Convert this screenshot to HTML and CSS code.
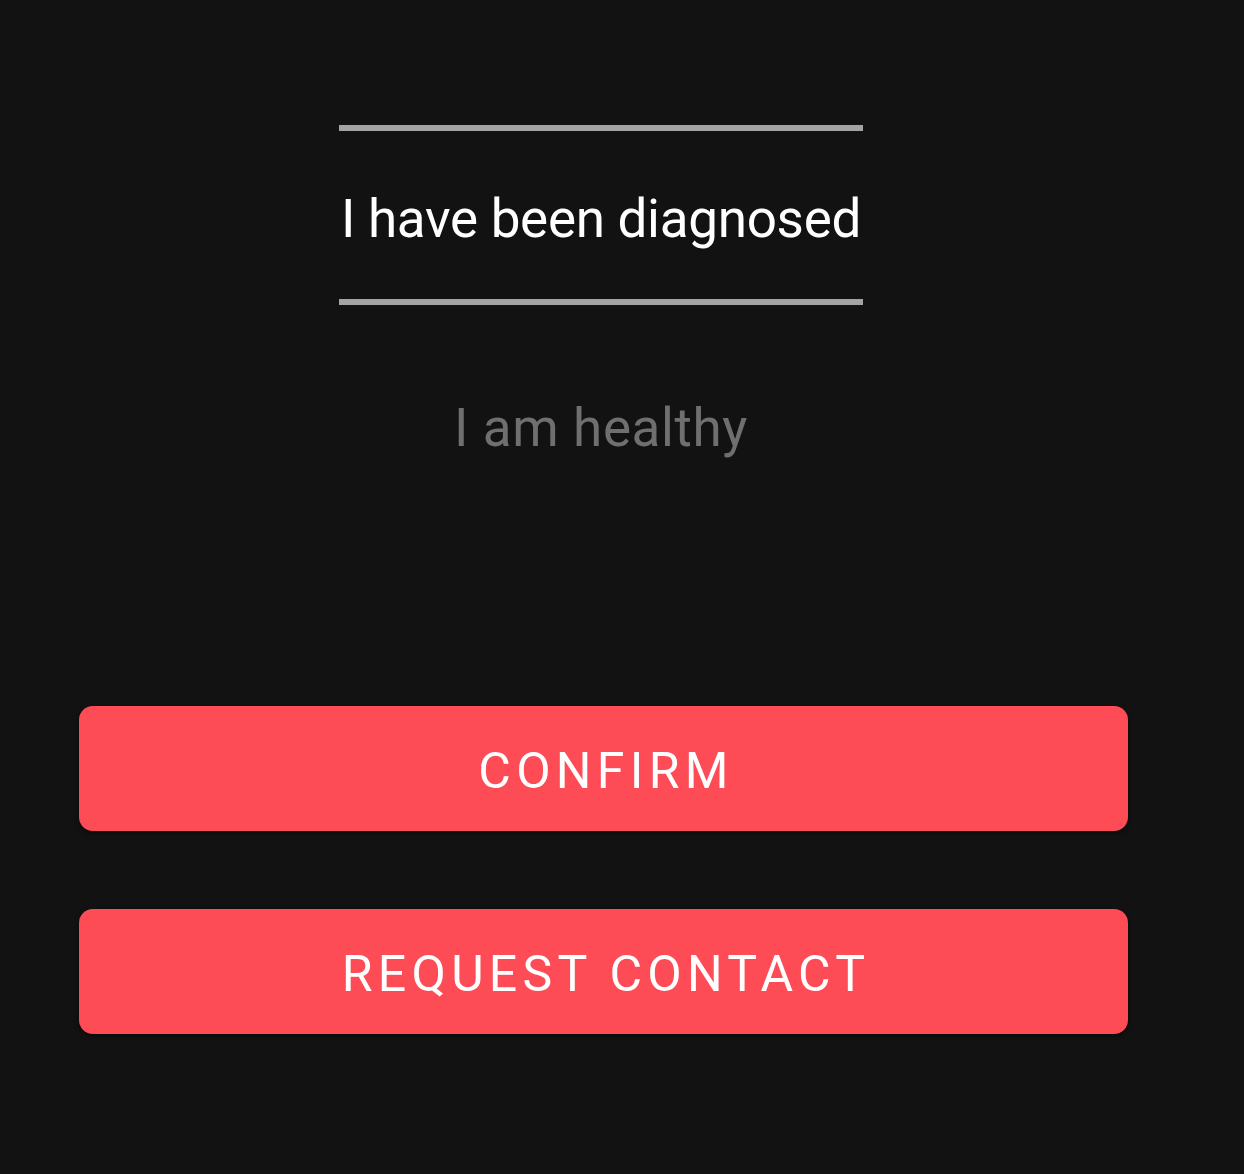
FILE: index.html
```html
<!DOCTYPE html>
<html lang="en">
<head>
<meta charset="utf-8">
<title>Status</title>
<link rel="stylesheet" href="styles.css">
</head>
<body>
<main class="screen">
  <section class="picker">
    <div class="rule"></div>
    <div class="option selected">I have been diagnosed</div>
    <div class="rule"></div>
    <div class="option dim">I am healthy</div>
  </section>
  <section class="actions">
    <button class="btn">CONFIRM</button>
    <button class="btn">REQUEST CONTACT</button>
  </section>
</main>
</body>
</html>
```
FILE: styles.css
```css
html, body {
  margin: 0;
  padding: 0;
  background: #121212;
}
body {
  width: 1244px;
  height: 1174px;
  overflow: hidden;
  font-family: Roboto, "Noto Sans", sans-serif;
}
.screen {
  display: flex;
  flex-direction: column;
  align-items: center;
  padding-top: 125px;
  width: 1202px;
}
.picker {
  width: 524px;
  display: flex;
  flex-direction: column;
  align-items: center;
}
.rule {
  width: 524px;
  height: 6px;
  background: #a3a3a3;
}
.option {
  font-size: 53px;
  line-height: 60px;
  white-space: nowrap;
  letter-spacing: -0.3px;
}
.selected {
  color: #ffffff;
  margin: 58px 0 50px;
}
.dim {
  color: #6f6f6f;
  margin-top: 93px;
  letter-spacing: 0.6px;
}
.actions {
  align-self: flex-start;
  margin-top: 248px;
  margin-left: 79px;
  width: 1049px;
  display: flex;
  flex-direction: column;
  gap: 78px;
}
.btn {
  height: 125px;
  border: none;
  border-radius: 14px;
  background: #fe4c57;
  color: #ffffff;
  font-family: Roboto, "Noto Sans", sans-serif;
  font-size: 50px;
  letter-spacing: 5.3px;
  padding: 4px 0 0 5px;
  box-shadow: 0 2px 4px rgba(0,0,0,0.5);
}
```
